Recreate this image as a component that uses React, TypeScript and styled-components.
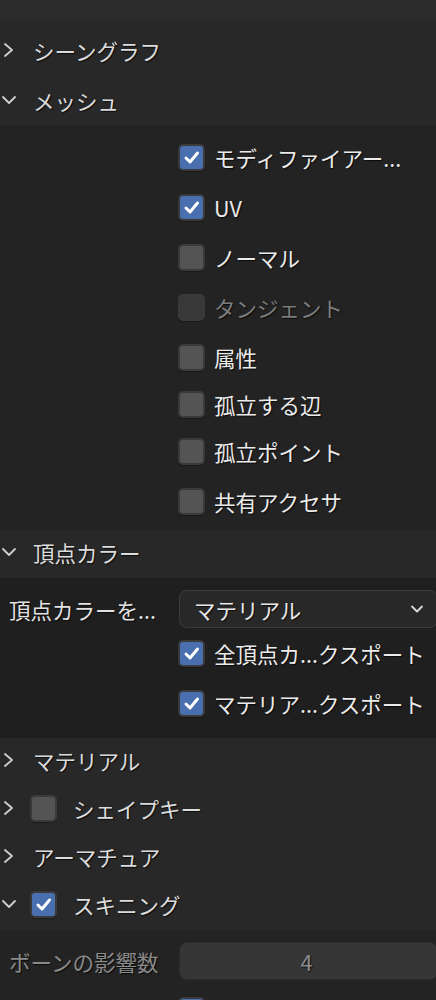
import React from "react";
import styled, { createGlobalStyle } from "styled-components";

const GlobalStyle = createGlobalStyle`
  html, body {
    margin: 0;
    padding: 0;
    background: #232323;
    overflow: hidden;
  }
  body {
    font-family: "Noto Sans CJK JP", "Noto Sans", sans-serif;
    -webkit-font-smoothing: antialiased;
  }
`;

const Page = styled.div`
  width: 436px;
  height: 1000px;
  overflow: hidden;
  display: flex;
  flex-direction: column;
  background: #232323;
`;

const TopBand = styled.div`
  height: 20px;
  flex-shrink: 0;
  background: #2c2c2c;
`;

const HeaderGroup = styled.div<{ $pt?: number; $pb?: number }>`
  background: #282828;
  padding-top: ${(p) => p.$pt ?? 0}px;
  padding-bottom: ${(p) => p.$pb ?? 0}px;
  display: flex;
  flex-direction: column;
  flex-shrink: 0;
`;

const HeaderRow = styled.div<{ $h: number; $lift?: number }>`
  height: ${(p) => p.$h}px;
  box-sizing: border-box;
  padding-bottom: ${(p) => p.$lift ?? 0}px;
  display: flex;
  align-items: center;
  color: #dcdcdc;
  font-size: 21.5px;
  text-shadow: 1px 1px 1px rgba(0, 0, 0, 0.7);
`;

const ChevronBox = styled.span<{ $w: number }>`
  width: ${(p) => p.$w}px;
  display: flex;
  align-items: center;
  flex-shrink: 0;
`;

const Content = styled.div<{ $bg: string; $pt: number; $pb: number }>`
  background: ${(p) => p.$bg};
  padding-top: ${(p) => p.$pt}px;
  padding-bottom: ${(p) => p.$pb}px;
  display: flex;
  flex-direction: column;
  flex-shrink: 0;
`;

const CheckRow = styled.div<{ $h: number }>`
  height: ${(p) => p.$h}px;
  display: flex;
  align-items: center;
  padding-left: 178px;
  font-size: 21.5px;
  text-shadow: 1px 1px 1px rgba(0, 0, 0, 0.7);
`;

const PartialRow = styled.div`
  height: 40px;
  box-sizing: border-box;
  padding: 17px 0 0 178px;
  display: flex;
  align-items: flex-start;
`;

const Label = styled.span<{ $disabled?: boolean }>`
  color: ${(p) => (p.$disabled ? "#7c7c7c" : "#ebebeb")};
  white-space: nowrap;
`;

const Box = styled.span<{ $checked?: boolean; $disabled?: boolean; $mr?: number }>`
  width: 23px;
  height: 23px;
  flex-shrink: 0;
  border-radius: 5px;
  border: 2px solid #3a3a3a;
  background: ${(p) =>
    p.$checked ? "#4a6fae" : p.$disabled ? "#383838" : "#545454"};
  margin-right: ${(p) => p.$mr ?? 9}px;
  display: flex;
  align-items: center;
  justify-content: center;
  box-shadow: 0 1px 1px rgba(0, 0, 0, 0.3);
`;

const FieldRow = styled.div`
  height: 38px;
  display: flex;
  align-items: center;
  margin-top: 12px;
  font-size: 21.5px;
  text-shadow: 1px 1px 1px rgba(0, 0, 0, 0.7);
`;

const FieldLabel = styled.span<{ $disabled?: boolean }>`
  width: 179px;
  flex-shrink: 0;
  padding-left: 9px;
  box-sizing: border-box;
  color: ${(p) => (p.$disabled ? "#8a8a8a" : "#e2e2e2")};
  white-space: nowrap;
`;

const Select = styled.div`
  flex: 1;
  height: 38px;
  margin-right: -2px;
  box-sizing: border-box;
  border: 1.5px solid #3c3c3c;
  border-radius: 8px;
  background: #282828;
  display: flex;
  align-items: center;
  justify-content: space-between;
  padding: 0 13px 0 14px;
  color: #e8e8e8;
`;

const NumberField = styled.div`
  flex: 1;
  height: 38px;
  margin-right: -2px;
  box-sizing: border-box;
  border-radius: 8px;
  background: #363636;
  border: 1px solid #2c2c2c;
  display: flex;
  align-items: center;
  justify-content: center;
  color: #8d8d8d;
  padding-right: 4px;
`;

const CheckMark = () => (
  <svg width="17" height="17" viewBox="0 0 17 17">
    <path
      d="M3 9 L7 13 L14.5 4"
      fill="none"
      stroke="#ffffff"
      strokeWidth="3"
      strokeLinecap="round"
      strokeLinejoin="round"
    />
  </svg>
);

const Chevron = ({ open }: { open: boolean }) =>
  open ? (
    <svg width="18" height="12" viewBox="0 0 18 12" style={{ marginLeft: 1 }}>
      <path d="M2 3 L8 9 L14 3" fill="none" stroke="#d0d0d0" strokeWidth="1.8" strokeLinecap="round" strokeLinejoin="round" />
    </svg>
  ) : (
    <svg width="16" height="16" viewBox="0 0 16 16" style={{ marginLeft: 2 }}>
      <path d="M3 2 L10 8 L3 14" fill="none" stroke="#d0d0d0" strokeWidth="1.8" strokeLinecap="round" strokeLinejoin="round" />
    </svg>
  );

const Check = ({
  checked,
  disabled,
  label,
  h = 50,
}: {
  checked?: boolean;
  disabled?: boolean;
  label: string;
  h?: number;
}) => (
  <CheckRow $h={h}>
    <Box $checked={checked} $disabled={disabled}>
      {checked && <CheckMark />}
    </Box>
    <Label $disabled={disabled}>{label}</Label>
  </CheckRow>
);

const Header = ({
  label,
  open = false,
  h = 50,
  lift = 0,
  toggle,
}: {
  label: string;
  open?: boolean;
  h?: number;
  lift?: number;
  toggle?: "on" | "off";
}) => (
  <HeaderRow $h={h} $lift={lift}>
    <ChevronBox $w={toggle ? 30 : 33}>
      <Chevron open={open} />
    </ChevronBox>
    {toggle && (
      <Box $checked={toggle === "on"} $mr={16}>
        {toggle === "on" && <CheckMark />}
      </Box>
    )}
    <span>{label}</span>
  </HeaderRow>
);

const SmallChevron = () => (
  <svg width="14" height="10" viewBox="0 0 14 10">
    <path d="M2 2.5 L7 7.5 L12 2.5" fill="none" stroke="#dcdcdc" strokeWidth="1.8" strokeLinecap="round" strokeLinejoin="round" />
  </svg>
);

export default function App() {
  return (
    <>
      <GlobalStyle />
      <Page>
        <TopBand />
        <HeaderGroup $pt={5}>
          <Header label="シーングラフ" />
          <Header label="メッシュ" open />
        </HeaderGroup>
        <Content $bg="#232323" $pt={7} $pb={4}>
          <Check checked label="モディファイアー..." />
          <Check checked label="UV" />
          <Check label="ノーマル" />
          <Check disabled label="タンジェント" />
          <Check label="属性" />
          <Check label="孤立する辺" h={44} />
          <Check label="孤立ポイント" />
          <Check label="共有アクセサ" />
        </Content>
        <HeaderGroup $pb={4}>
          <Header label="頂点カラー" open h={44} />
        </HeaderGroup>
        <Content $bg="#1f1f1f" $pt={0} $pb={10}>
          <FieldRow>
            <FieldLabel>頂点カラーを...</FieldLabel>
            <Select>
              <span>マテリアル</span>
              <SmallChevron />
            </Select>
          </FieldRow>
          <Check checked label="全頂点カ...クスポート" />
          <Check checked label="マテリア...クスポート" />
        </Content>
        <HeaderGroup>
          <Header label="マテリアル" h={48} lift={4} />
          <Header label="シェイプキー" h={48} lift={4} toggle="off" />
          <Header label="アーマチュア" h={48} lift={4} />
          <Header label="スキニング" open h={48} lift={4} toggle="on" />
        </HeaderGroup>
        <Content $bg="#232323" $pt={0} $pb={0}>
          <FieldRow>
            <FieldLabel $disabled>ボーンの影響数</FieldLabel>
            <NumberField>4</NumberField>
          </FieldRow>
          <PartialRow>
            <Box $checked>
              <CheckMark />
            </Box>
          </PartialRow>
        </Content>
      </Page>
    </>
  );
}
